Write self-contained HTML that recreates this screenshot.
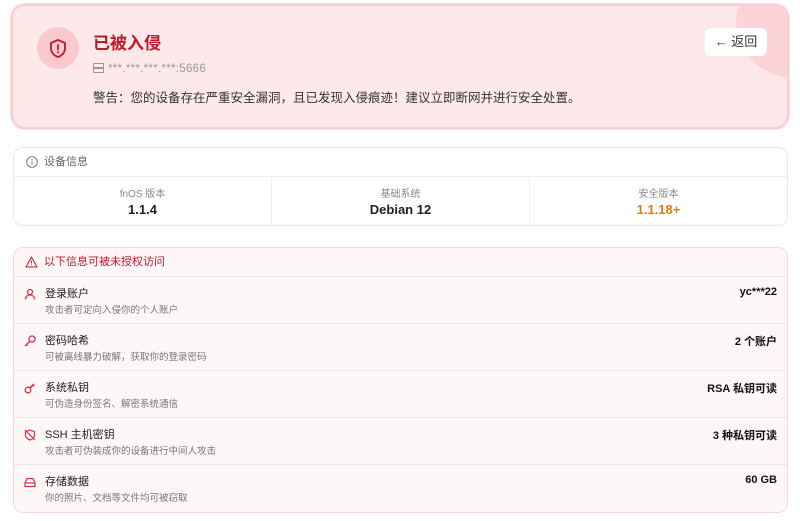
<!DOCTYPE html>
<html><head><meta charset="utf-8"><style>
*{box-sizing:border-box;margin:0;padding:0}
body{width:800px;height:521px;background:#fff;font-family:"Liberation Sans","Noto Sans CJK SC",sans-serif;position:relative;overflow:hidden;color:#222}
.hero{position:absolute;left:11px;top:4px;width:778px;height:125px;background:#fde8ea;border:2px solid #f7cfd3;border-radius:14px;overflow:hidden;box-shadow:0 0 0 1px #fbe0e3}
.deco{position:absolute;left:723px;top:-38px;width:120px;height:110px;border-radius:50%;background:#fcd4d7}
.ic{position:absolute;left:24px;top:21px;width:42px;height:42px;border-radius:50%;background:#f9c9cd}
.ttl{position:absolute;left:80px;top:23px;font-size:17px;font-weight:bold;color:#c0172b}
.ip{position:absolute;left:80px;top:57px;font-size:11.5px;color:#999;letter-spacing:.3px}
.warn{position:absolute;left:80px;top:81px;font-size:12.5px;color:#333}
.back{position:absolute;left:692px;top:22px;width:62px;height:28px;background:#fff;border-radius:6px;font-size:13px;color:#333;line-height:28px;text-align:center}
.card{position:absolute;left:13px;width:775px;border:1px solid #e8e8e8;border-radius:10px;background:#fff}
.hd{height:29px;border-bottom:1px solid #eee;font-size:11px;color:#666;line-height:28px;padding-left:30px;position:relative}
.cols{display:flex;height:48px}
.col{flex:1;text-align:center;border-right:1px solid #eee;padding-top:8px}
.col:last-child{border-right:none}
.col .l{font-size:10px;color:#888}
.col .v{font-size:13px;font-weight:bold;color:#222;margin-top:2px}
.vuln{top:247px;height:266px;background:#fef7f7;border-color:#f6d8da}
.vuln .hd{color:#c0172b;border-color:#f6e0e1}
.row{height:47px;border-bottom:1px solid #f6e2e3;position:relative}
.row:last-child{border-bottom:none}
.row .t{position:absolute;left:31px;top:8px;font-size:11px;color:#222}
.row .d{position:absolute;left:31px;top:25px;font-size:9.5px;color:#777}
.row .r{position:absolute;right:10px;top:9px;font-size:11px;font-weight:bold;color:#111}
.row svg{position:absolute;left:10px;top:11px}
</style></head><body>
<div class="hero"><div class="deco"></div>
<div class="ic"><svg width="42" height="42" viewBox="0 0 42 42"><path d="M21 13l7 3v5c0 4.5-3 7.5-7 9-4-1.5-7-4.5-7-9v-5z" fill="none" stroke="#c0172b" stroke-width="1.8" stroke-linejoin="round"/><path d="M21 18v4.5" stroke="#c0172b" stroke-width="1.8" stroke-linecap="round"/><circle cx="21" cy="25.3" r="1" fill="#c0172b"/></svg></div>
<div class="ttl">已被入侵</div>
<div class="ip"><svg width="11" height="10" viewBox="0 0 11 10" style="vertical-align:-1px;margin-right:4px"><rect x=".5" y=".5" width="10" height="4" fill="none" stroke="#999"/><rect x=".5" y="5.5" width="10" height="4" fill="none" stroke="#999"/></svg>***.***.***.***:5666</div>
<div class="warn">警告：您的设备存在严重安全漏洞，且已发现入侵痕迹！建议立即断网并进行安全处置。</div>
<div class="back">← 返回</div>
</div>
<div class="card" style="top:147px;height:79px">
<div class="hd"><svg width="12" height="12" viewBox="0 0 12 12" style="position:absolute;left:12px;top:8px"><circle cx="6" cy="6" r="5.3" fill="none" stroke="#777"/><path d="M6 5.2v3.3" stroke="#777"/><circle cx="6" cy="3.6" r=".6" fill="#777"/></svg>设备信息</div>
<div class="cols">
<div class="col"><div class="l">fnOS 版本</div><div class="v">1.1.4</div></div>
<div class="col"><div class="l">基础系统</div><div class="v">Debian 12</div></div>
<div class="col"><div class="l">安全版本</div><div class="v" style="color:#e07b10">1.1.18+</div></div>
</div></div>
<div class="card vuln">
<div class="hd"><svg width="13" height="12" viewBox="0 0 13 12" style="position:absolute;left:11px;top:8px"><path d="M6.5 1L12 11H1z" fill="none" stroke="#c0172b" stroke-linejoin="round"/><path d="M6.5 4.5v3" stroke="#c0172b"/><circle cx="6.5" cy="9" r=".5" fill="#c0172b"/></svg>以下信息可被未授权访问</div>
<div class="row"><svg width="12" height="12" viewBox="0 0 12 12"><circle cx="6" cy="4" r="2.5" fill="none" stroke="#d6344a" stroke-width="1.3"/><path d="M1.5 11.5c0-3 2-4.5 4.5-4.5s4.5 1.5 4.5 4.5" fill="none" stroke="#d6344a" stroke-width="1.3"/></svg><div class="t">登录账户</div><div class="d">攻击者可定向入侵你的个人账户</div><div class="r">yc***22</div></div>
<div class="row"><svg width="12" height="12" viewBox="0 0 12 12"><circle cx="8" cy="4" r="3" fill="none" stroke="#d6344a" stroke-width="1.3"/><path d="M6 6L1 11M2.5 9.5l1.2 1.2" fill="none" stroke="#d6344a" stroke-width="1.3"/></svg><div class="t">密码哈希</div><div class="d">可被离线暴力破解，获取你的登录密码</div><div class="r">2 个账户</div></div>
<div class="row"><svg width="12" height="12" viewBox="0 0 12 12"><circle cx="4" cy="8" r="2.8" fill="none" stroke="#d6344a" stroke-width="1.3"/><path d="M6 6l4-4M8.5 2.5l1.5 1.5" fill="none" stroke="#d6344a" stroke-width="1.6"/></svg><div class="t">系统私钥</div><div class="d">可伪造身份签名、解密系统通信</div><div class="r">RSA 私钥可读</div></div>
<div class="row"><svg width="12" height="12" viewBox="0 0 12 12"><path d="M6 1l4.5 1.8v3c0 2.7-2 4.5-4.5 5.2-2.5-.7-4.5-2.5-4.5-5.2v-3z" fill="none" stroke="#d6344a" stroke-width="1.2"/><path d="M1 1l10 10" stroke="#d6344a" stroke-width="1.2"/></svg><div class="t">SSH 主机密钥</div><div class="d">攻击者可伪装成你的设备进行中间人攻击</div><div class="r">3 种私钥可读</div></div>
<div class="row"><svg width="12" height="12" viewBox="0 0 12 12"><path d="M1 7L3 2.5h6L11 7v3.5H1z" fill="none" stroke="#d6344a" stroke-width="1.2"/><path d="M1 7h10" stroke="#d6344a" stroke-width="1.2"/></svg><div class="t">存储数据</div><div class="d">你的照片、文档等文件均可被窃取</div><div class="r">60 GB</div></div>
</div>
</body></html>
